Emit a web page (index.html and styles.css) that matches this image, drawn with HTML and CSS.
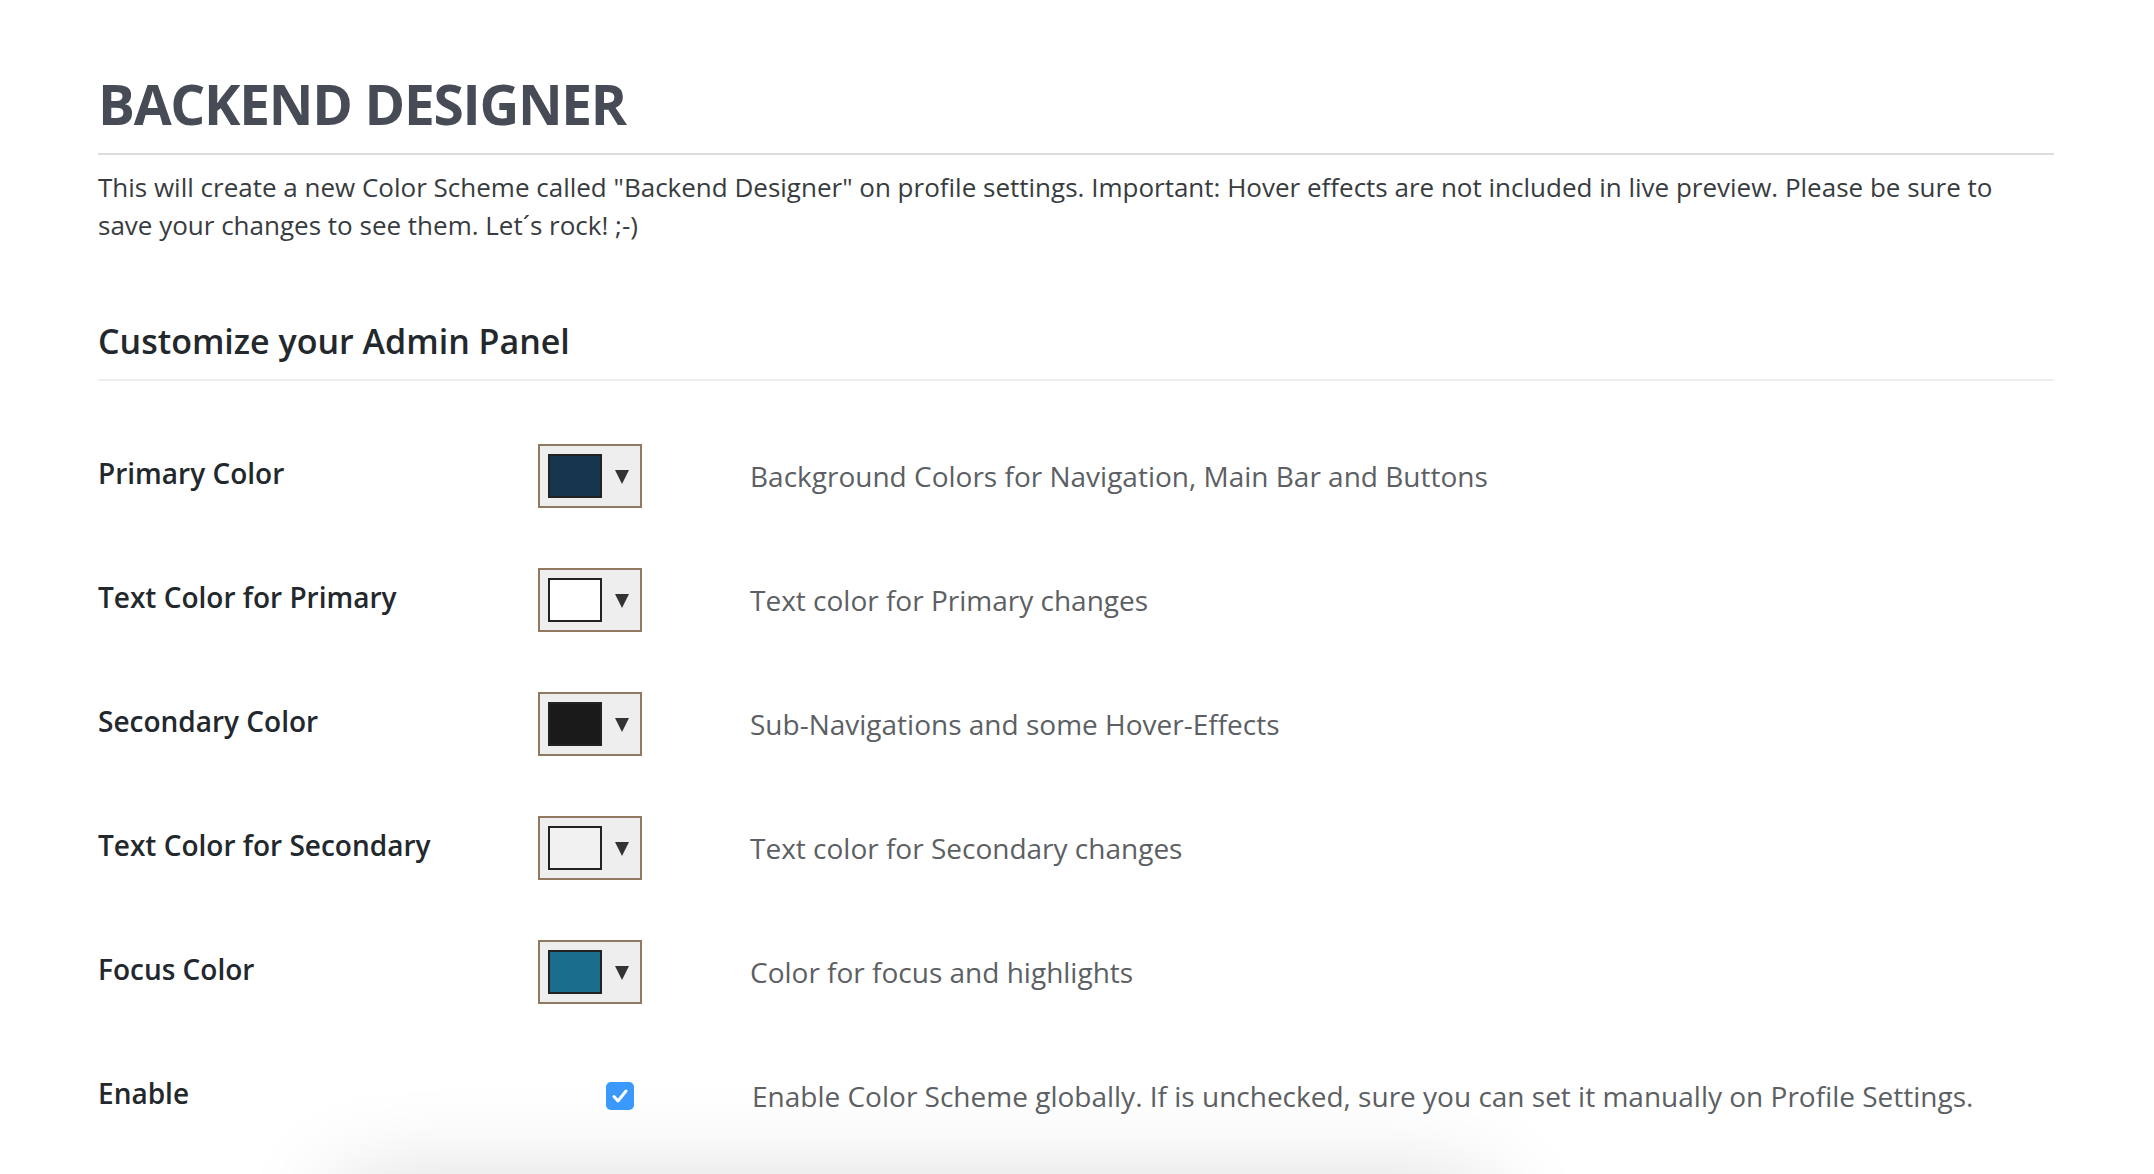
FILE: index.html
```html
<!DOCTYPE html>
<html lang="en">
<head>
    <meta charset="UTF-8">
    <meta name="viewport" content="width=device-width, initial-scale=1.0">
    <title>Backend Designer</title>
    <link rel="stylesheet" href="styles.css">
</head>
<body>
    <div class="wrap">
        <h1 class="page-title">BACKEND DESIGNER</h1>
        <p class="intro">This will create a new Color Scheme called "Backend Designer" on profile settings. Important: Hover effects are not included in live preview. Please be sure to save your changes to see them. Let´s rock! ;-)</p>

        <h2 class="section-title">Customize your Admin Panel</h2>

        <div class="form-rows">
            <div class="row">
                <div class="label">Primary Color</div>
                <div class="field">
                    <button class="color-pick"><span class="swatch swatch-primary"></span><span class="arrow"></span></button>
                </div>
                <div class="desc">Background Colors for Navigation, Main Bar and Buttons</div>
            </div>
            <div class="row">
                <div class="label">Text Color for Primary</div>
                <div class="field">
                    <button class="color-pick"><span class="swatch swatch-primary-text"></span><span class="arrow"></span></button>
                </div>
                <div class="desc">Text color for Primary changes</div>
            </div>
            <div class="row">
                <div class="label">Secondary Color</div>
                <div class="field">
                    <button class="color-pick"><span class="swatch swatch-secondary"></span><span class="arrow"></span></button>
                </div>
                <div class="desc">Sub-Navigations and some Hover-Effects</div>
            </div>
            <div class="row">
                <div class="label">Text Color for Secondary</div>
                <div class="field">
                    <button class="color-pick"><span class="swatch swatch-secondary-text"></span><span class="arrow"></span></button>
                </div>
                <div class="desc">Text color for Secondary changes</div>
            </div>
            <div class="row">
                <div class="label">Focus Color</div>
                <div class="field">
                    <button class="color-pick"><span class="swatch swatch-focus"></span><span class="arrow"></span></button>
                </div>
                <div class="desc">Color for focus and highlights</div>
            </div>
            <div class="row">
                <div class="label">Enable</div>
                <div class="field">
                    <span class="checkbox">
                        <svg width="28" height="28" viewBox="0 0 28 28"><path d="M8 14.5l4 4.5 8-10" fill="none" stroke="#fff" stroke-width="3" stroke-linecap="round" stroke-linejoin="round"/></svg>
                    </span>
                </div>
                <div class="desc desc-enable">Enable Color Scheme globally. If is unchecked, sure you can set it manually on Profile Settings.</div>
            </div>
        </div>

        <div class="preview"></div>
    </div>
</body>
</html>
```

FILE: styles.css
```css
body {
    margin: 0;
    background: #fff;
    font-family: "Open Sans", "Noto Sans", sans-serif;
}
.wrap {
    padding: 71px 100px 40px 98px;
}
.page-title {
    margin: 0;
    padding-bottom: 16px;
    border-bottom: 2px solid #dcdcdc;
    font-size: 55px;
    line-height: 66px;
    font-weight: 700;
    letter-spacing: -1.3px;
    color: #464b55;
}
.intro {
    margin: 13px 0 0;
    padding-right: 40px;
    font-size: 26px;
    line-height: 38px;
    color: #383c40;
}
.section-title {
    margin: 73px 0 0;
    padding-bottom: 14px;
    border-bottom: 2px solid #eeeeee;
    font-size: 34px;
    line-height: 48px;
    font-weight: 600;
    color: #23282d;
}
.form-rows {
    padding-top: 33px;
}
.row {
    display: grid;
    grid-template-columns: 440px 212px 1fr;
    align-items: center;
    height: 124px;
}
.label {
    padding-bottom: 6px;
    font-size: 28px;
    font-weight: 600;
    color: #23282d;
}
.field {
    display: flex;
    align-items: center;
}
.color-pick {
    display: flex;
    align-items: center;
    width: 104px;
    height: 64px;
    padding: 0 0 0 8px;
    border: 2px solid #917a60;
    background: #eeeeee;
    cursor: pointer;
}
.swatch {
    width: 54px;
    height: 44px;
    box-sizing: border-box;
    border: 2px solid #222;
}
.swatch-primary { background: #15364c; }
.swatch-primary-text { background: #ffffff; }
.swatch-secondary { background: #1b1a1b; }
.swatch-secondary-text { background: #f1f1f1; }
.swatch-focus { background: #1a6d8d; }
.arrow {
    width: 0;
    height: 0;
    margin-left: 13px;
    margin-top: 1px;
    border-left: 7px solid transparent;
    border-right: 7px solid transparent;
    border-top: 14px solid #333;
}
.checkbox {
    display: flex;
    width: 28px;
    height: 28px;
    margin-left: 68px;
    border-radius: 5px;
    background: #3b99fc;
}
.desc {
    font-size: 28px;
    color: #5c5f63;
}
.desc-enable {
    padding-left: 2px;
}
.preview {
    height: 300px;
    width: 1150px;
    margin: 27px 0 0 240px;
    background: #fff;
    box-shadow: 0 0 100px rgba(0, 0, 0, 0.16);
}
```
